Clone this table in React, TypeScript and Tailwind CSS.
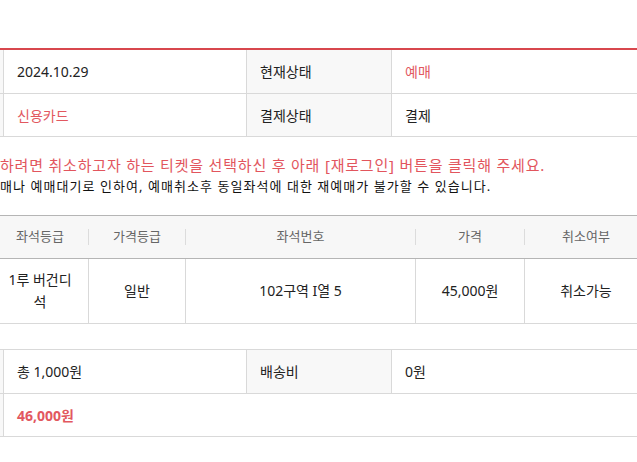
import React from "react";

const font = { fontFamily: '"Noto Sans", "Noto Sans CJK KR", sans-serif' };

function HeadCell({ label, sep = true }: { label: string; sep?: boolean }) {
  return (
    <div className="flex items-center">
      {sep ? <div className="w-px h-[16px] bg-[#dcdcdc]" /> : null}
      <span className="flex-1 text-center">{label}</span>
    </div>
  );
}

export default function App() {
  return (
    <div className="w-[637px] h-[462px] overflow-hidden bg-white text-[#222]" style={font}>
      <div className="pt-[48px]">
        {/* top info table */}
        <div className="ml-[-97px] w-[750px] border-t-2 border-[#d8474d] text-[14px]">
          <div className="grid grid-cols-[101px_242px_146px_1fr] h-[44px] border-b border-[#d9d9d9]">
            <div className="bg-[#f8f8f8] border-r border-[#d9d9d9]" />
            <div className="flex items-center pl-[13px]">2024.10.29</div>
            <div className="flex items-center pl-[13px] bg-[#f8f8f8] border-x border-[#d9d9d9]">현재상태</div>
            <div className="flex items-center pl-[13px] text-[#e2585f]">예매</div>
          </div>
          <div className="grid grid-cols-[101px_242px_146px_1fr] h-[43px] border-b border-[#d9d9d9]">
            <div className="bg-[#f8f8f8] border-r border-[#d9d9d9]" />
            <div className="flex items-center pl-[13px] text-[#e2585f]">신용카드</div>
            <div className="flex items-center pl-[13px] bg-[#f8f8f8] border-x border-[#d9d9d9]">결제상태</div>
            <div className="flex items-center pl-[13px]">결제</div>
          </div>
        </div>

        {/* notice */}
        <div className="mt-[18px] whitespace-nowrap">
          <p className="text-[15px] leading-[21px] tracking-[0.8px] text-[#e2555d]">
            하려면 취소하고자 하는 티켓을 선택하신 후 아래 [재로그인] 버튼을 클릭해 주세요.
          </p>
          <p className="text-[13px] leading-[21px] tracking-[1.05px] text-[#111]">
            매나 예매대기로 인하여, 예매취소후 동일좌석에 대한 재예매가 불가할 수 있습니다.
          </p>
        </div>

        {/* seat table */}
        <div className="mt-[18px] ml-[-8px] w-[660px] border-t border-[#b5b5b5]">
          <div className="grid grid-cols-[96px_97px_230px_109px_1fr] h-[43px] bg-[#f7f7f7] border-b border-[#b5b5b5] text-[13px] text-[#666]">
            <HeadCell label="좌석등급" sep={false} />
            <HeadCell label="가격등급" />
            <HeadCell label="좌석번호" />
            <HeadCell label="가격" />
            <div className="flex items-center">
              <div className="w-px h-[16px] bg-[#dcdcdc]" />
              <span className="w-[122px] text-center">취소여부</span>
            </div>
          </div>
          <div className="grid grid-cols-[96px_97px_230px_109px_1fr] h-[65px] border-b border-[#d9d9d9] text-[14px] leading-[22px]">
            <div className="flex items-center justify-center text-center px-[10px]">1루 버건디석</div>
            <div className="flex items-center justify-center border-l border-[#d9d9d9]">일반</div>
            <div className="flex items-center justify-center border-l border-[#d9d9d9]">102구역 I열 5</div>
            <div className="flex items-center justify-center border-l border-[#d9d9d9]">45,000원</div>
            <div className="flex items-center border-l border-[#d9d9d9]">
              <span className="w-[122px] text-center">취소가능</span>
            </div>
          </div>
        </div>

        {/* totals table */}
        <div className="mt-[25px] ml-[-97px] w-[750px] border-t border-[#d9d9d9] text-[14px]">
          <div className="grid grid-cols-[101px_242px_146px_1fr] h-[44px] border-b border-[#d9d9d9]">
            <div className="bg-[#f8f8f8] border-r border-[#d9d9d9]" />
            <div className="flex items-center pl-[13px]">총 1,000원</div>
            <div className="flex items-center pl-[13px] bg-[#f8f8f8] border-x border-[#d9d9d9]">배송비</div>
            <div className="flex items-center pl-[13px]">0원</div>
          </div>
          <div className="grid grid-cols-[101px_1fr] h-[43px] border-b border-[#d9d9d9]">
            <div className="bg-[#f8f8f8] border-r border-[#d9d9d9]" />
            <div className="flex items-center pl-[13px] font-bold text-[#e2585f]">46,000원</div>
          </div>
        </div>
      </div>
    </div>
  );
}
